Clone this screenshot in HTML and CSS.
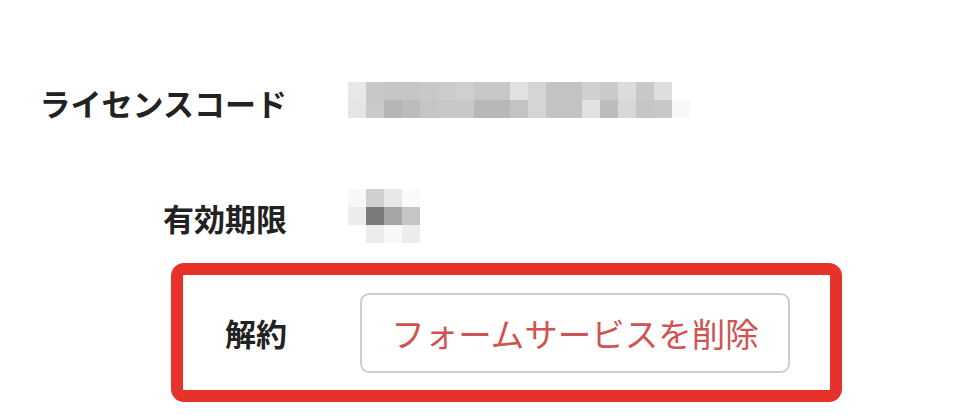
FILE: index.html
```html
<!DOCTYPE html>
<html lang="ja">
<head>
<meta charset="utf-8">
<title>ライセンス</title>
<link rel="stylesheet" href="styles.css">
</head>
<body>
<main class="page">
  <div class="row">
    <div class="label">ライセンスコード</div>
    <div class="value">
      <div class="mosaic code">
        <i class="g232"></i><i class="g200"></i><i class="g197"></i><i class="g197"></i><i class="g200"></i><i class="g203"></i><i class="g207"></i><i class="g200"></i><i class="g200"></i><i class="g226"></i><i class="g213"></i><i class="g195"></i><i class="g195"></i><i class="g208"></i><i class="g202"></i><i class="g220"></i><i class="g200"></i><i class="g222"></i><i class="g255"></i>
        <i class="g229"></i><i class="g202"></i><i class="g181"></i><i class="g188"></i><i class="g197"></i><i class="g200"></i><i class="g200"></i><i class="g184"></i><i class="g184"></i><i class="g195"></i><i class="g213"></i><i class="g195"></i><i class="g195"></i><i class="g226"></i><i class="g188"></i><i class="g216"></i><i class="g197"></i><i class="g200"></i><i class="g248"></i>
      </div>
    </div>
  </div>
  <div class="row second">
    <div class="label">有効期限</div>
    <div class="value">
      <div class="mosaic date">
        <i class="g248"></i><i class="g208"></i><i class="g232"></i><i class="g250"></i>
        <i class="g236"></i><i class="g122"></i><i class="g165"></i><i class="g197"></i>
        <i class="g255"></i><i class="g236"></i><i class="g248"></i><i class="g236"></i>
      </div>
    </div>
  </div>
  <div class="highlight">
    <div class="label short">解約</div>
    <button class="delete" type="button">フォームサービスを削除</button>
  </div>
</main>
</body>
</html>
```
FILE: styles.css
```css
html, body {
  margin: 0;
  padding: 0;
  background: #ffffff;
}

body {
  width: 960px;
  height: 420px;
  overflow: hidden;
  font-family: "Noto Sans CJK JP", "Noto Sans", sans-serif;
  color: #222222;
}

.page {
  display: flex;
  flex-direction: column;
  padding-top: 72px;
}

.row {
  display: flex;
  align-items: center;
  height: 60px;
  gap: 61px;
}

.row.second {
  margin-top: 55px;
}

.label {
  width: 287px;
  text-align: right;
  font-size: 31px;
  font-weight: 700;
  letter-spacing: 0;
  white-space: nowrap;
  line-height: 1;
}

.mosaic {
  display: grid;
  grid-auto-rows: 18px;
}

.mosaic i {
  display: block;
  width: 18px;
  height: 18px;
}

.code {
  grid-template-columns: repeat(19, 18px);
  margin-top: -4px;
}

.date {
  grid-template-columns: repeat(4, 18px);
  margin-top: -3px;
}

.g122 { background: #7a7a7a; }
.g165 { background: #a5a5a5; }
.g181 { background: #b5b5b5; }
.g184 { background: #b8b8b8; }
.g188 { background: #bcbcbc; }
.g195 { background: #c3c3c3; }
.g197 { background: #c5c5c5; }
.g200 { background: #c8c8c8; }
.g202 { background: #cacaca; }
.g203 { background: #cbcbcb; }
.g207 { background: #cfcfcf; }
.g208 { background: #d0d0d0; }
.g213 { background: #d5d5d5; }
.g216 { background: #d8d8d8; }
.g220 { background: #dcdcdc; }
.g222 { background: #dedede; }
.g226 { background: #e2e2e2; }
.g229 { background: #e5e5e5; }
.g232 { background: #e8e8e8; }
.g236 { background: #ececec; }
.g248 { background: #f8f8f8; }
.g250 { background: #fafafa; }
.g255 { background: #ffffff; }

.highlight {
  margin-top: 16px;
  margin-left: 171px;
  width: 647px;
  height: 115px;
  border: 12px solid #e6322a;
  border-radius: 13px;
  display: flex;
  align-items: center;
}

.label.short {
  width: 104px;
}

.delete {
  margin-left: 73px;
  width: 430px;
  height: 80px;
  box-sizing: border-box;
  border: 2px solid #cfcfcf;
  border-radius: 9px;
  background: #ffffff;
  color: #cf5350;
  font-family: "Noto Sans CJK JP", "Noto Sans", sans-serif;
  font-size: 33.5px;
  font-weight: 400;
  line-height: 1;
  padding: 0;
  cursor: pointer;
}
```
